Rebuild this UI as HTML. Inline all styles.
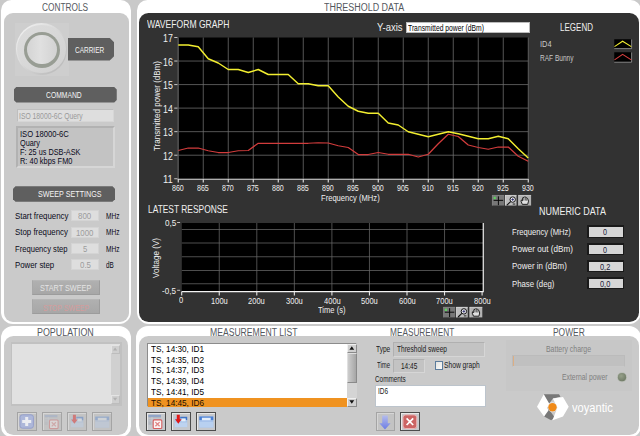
<!DOCTYPE html>
<html>
<head>
<meta charset="utf-8">
<style>
html,body{margin:0;padding:0;}
body{width:640px;height:436px;overflow:hidden;background:#c9c9c9;position:relative;font-family:"Liberation Sans",sans-serif;font-size:8px;color:#111;}
.abs{position:absolute;box-sizing:border-box;}
.wp{position:absolute;background:#fff;}
.gp{position:absolute;background:#cacaca;}
.dp{position:absolute;background:#323232;}
.t{position:absolute;white-space:nowrap;}
.bar{position:absolute;background:#5f5f5f;
 clip-path:polygon(2.5px 0,calc(100% - 2.5px) 0,100% 2.5px,100% calc(100% - 2.5px),calc(100% - 2.5px) 100%,2.5px 100%,0 calc(100% - 2.5px),0 2.5px);}
.fld{position:absolute;background:#dedede;border:1px solid #d4d4d4;box-sizing:border-box;}
.btn{position:absolute;box-sizing:border-box;background:#c4c4c4;border:1px solid #a0a0a0;border-top-color:#e0e0e0;border-left-color:#e0e0e0;}
svg{position:absolute;left:0;top:0;}
</style>
</head>
<body>
<div class="wp" style="left:1px;top:-0.2px;width:130px;height:323.9px;border-radius:10.5px 10.5px 12px 12px;"></div>
<div class="gp" style="left:3.85px;top:13px;width:125.25px;height:308.6px;border-radius:9px;"></div>
<div class="wp" style="left:1px;top:325.7px;width:129.6px;height:111.1px;border-radius:12px 12px 10.5px 10.5px;"></div>
<div class="gp" style="left:3.85px;top:336px;width:124.35px;height:98.8px;border-radius:9.5px;"></div>
<div class="wp" style="left:137px;top:-0.2px;width:504px;height:324.3px;border-radius:10.5px 10.5px 12px 12px;"></div>
<div class="dp" style="left:139px;top:13px;width:500.1px;height:309.3px;border-radius:9.5px;"></div>
<div class="wp" style="left:136.3px;top:325.9px;width:504.7px;height:110.9px;border-radius:12px 12px 10.5px 10.5px;"></div>
<div class="gp" style="left:138.6px;top:336.1px;width:500.1px;height:98.7px;border-radius:9.5px;"></div>
<div class="t" style="left:42.00px;top:2px;font-size:10px;line-height:11px;color:#54585e;transform-origin:0 50%;transform:scaleX(0.828);">CONTROLS</div>
<div class="t" style="left:323.50px;top:2px;font-size:10px;line-height:11px;color:#54585e;transform-origin:0 50%;transform:scaleX(0.894);">THRESHOLD DATA</div>
<div class="t" style="left:37.00px;top:327px;font-size:10px;line-height:11px;color:#54585e;transform-origin:0 50%;transform:scaleX(0.891);">POPULATION</div>
<div class="t" style="left:210.40px;top:327px;font-size:10px;line-height:11px;color:#54585e;transform-origin:0 50%;transform:scaleX(0.861);">MEASUREMENT LIST</div>
<div class="t" style="left:389.50px;top:327px;font-size:10px;line-height:11px;color:#54585e;transform-origin:0 50%;transform:scaleX(0.826);">MEASUREMENT</div>
<div class="t" style="left:553.25px;top:327px;font-size:10px;line-height:11px;color:#54585e;transform-origin:0 50%;transform:scaleX(0.840);">POWER</div>
<div class="abs" style="left:14.5px;top:22.5px;width:54.0px;height:53.5px;background:#cecece;"></div>
<div class="abs" style="left:15.6px;top:23.2px;width:51.8px;height:51.8px;border-radius:50%;background:linear-gradient(135deg,#f6f6f6 0%,#dcdcdc 40%,#c4c4c4 75%,#b4b4b4 100%);"></div>
<div class="abs" style="left:17.1px;top:24.7px;width:48.8px;height:48.8px;border-radius:50%;background:linear-gradient(135deg,#dcdcdc 0%,#d8d8d8 50%,#d0d0d0 100%);"></div>
<div class="abs" style="left:23.9px;top:31.5px;width:36.2px;height:36.2px;border-radius:50%;background:#989d94;"></div>
<div class="abs" style="left:27.1px;top:34.7px;width:29.8px;height:29.8px;border-radius:50%;background:linear-gradient(90deg,#d4d4d4 0%,#e0e0e0 45%,#d2d2d2 100%);"></div>
<div class="abs" style="left:67.7px;top:38px;width:46.4px;height:22.5px;background:#5f5f5f;clip-path:polygon(0 0,calc(100% - 4.3px) 0,100% 4.3px,100% calc(100% - 4.3px),calc(100% - 4.3px) 100%,0 100%);"></div>
<div class="t" style="left:74.50px;top:45px;font-size:8.9px;line-height:10px;color:#f4f4f4;transform-origin:0 50%;transform:scaleX(0.730);">CARRIER</div>
<div class="bar" style="left:13.75px;top:87px;width:103px;height:15.5px;"></div>
<div class="t" style="left:46.25px;top:90px;font-size:8.9px;line-height:10px;color:#f4f4f4;transform-origin:0 50%;transform:scaleX(0.761);">COMMAND</div>
<div class="abs" style="left:16.6px;top:108.9px;width:97.0px;height:13.199999999999989px;background:#dedede;border:1.4px solid #bebebe;border-bottom-color:#d6d6d6;border-right-color:#d6d6d6;"></div>
<div class="t" style="left:18.75px;top:111px;font-size:8.6px;line-height:10px;color:#9a9a9a;transform-origin:0 50%;transform:scaleX(0.789);">ISO 18000-6C Query</div>
<div class="abs" style="left:15.6px;top:125.7px;width:99.30000000000001px;height:42.60000000000001px;background:#c3c3c3;border:2.2px solid #b2b2b2;border-bottom-color:#d6d6d6;border-right-color:#d6d6d6;"></div>
<div class="t" style="left:20.00px;top:129px;font-size:8.6px;line-height:10px;color:#0a0a20;transform-origin:0 50%;transform:scaleX(0.887);">ISO 18000-6C</div>
<div class="t" style="left:20.00px;top:138px;font-size:8.6px;line-height:10px;color:#0a0a20;transform-origin:0 50%;transform:scaleX(0.854);">Quary</div>
<div class="t" style="left:20.00px;top:147px;font-size:8.6px;line-height:10px;color:#0a0a20;transform-origin:0 50%;transform:scaleX(0.850);">F: 25 us DSB-ASK</div>
<div class="t" style="left:20.00px;top:156px;font-size:8.6px;line-height:10px;color:#0a0a20;transform-origin:0 50%;transform:scaleX(0.865);">R: 40 kbps FM0</div>
<div class="bar" style="left:13px;top:186.25px;width:102px;height:15.5px;"></div>
<div class="t" style="left:37.50px;top:189px;font-size:8.9px;line-height:10px;color:#f4f4f4;transform-origin:0 50%;transform:scaleX(0.807);">SWEEP SETTINGS</div>
<div class="t" style="left:14.50px;top:211px;font-size:8.6px;line-height:10px;color:#0a0a20;transform-origin:0 50%;transform:scaleX(0.917);">Start frequency</div>
<div class="fld" style="left:71.25px;top:210.25px;width:27.5px;height:11.0px;"></div>
<div class="t" style="left:78.00px;top:211px;font-size:8.6px;line-height:10px;color:#9c9c9c;transform-origin:0 50%;transform:scaleX(0.923);">800</div>
<div class="t" style="left:105.50px;top:211px;font-size:8.6px;line-height:10px;color:#0a0a20;transform-origin:0 50%;transform:scaleX(0.764);">MHz</div>
<div class="t" style="left:14.50px;top:227px;font-size:8.6px;line-height:10px;color:#0a0a20;transform-origin:0 50%;transform:scaleX(0.916);">Stop frequency</div>
<div class="fld" style="left:71.25px;top:226.75px;width:27.5px;height:11.0px;"></div>
<div class="t" style="left:76.25px;top:228px;font-size:8.6px;line-height:10px;color:#9c9c9c;transform-origin:0 50%;transform:scaleX(0.915);">1000</div>
<div class="t" style="left:105.50px;top:227px;font-size:8.6px;line-height:10px;color:#0a0a20;transform-origin:0 50%;transform:scaleX(0.764);">MHz</div>
<div class="t" style="left:14.50px;top:244px;font-size:8.6px;line-height:10px;color:#0a0a20;transform-origin:0 50%;transform:scaleX(0.886);">Frequency step</div>
<div class="fld" style="left:71.25px;top:243.25px;width:27.5px;height:11.0px;"></div>
<div class="t" style="left:82.50px;top:244px;font-size:8.6px;line-height:10px;color:#9c9c9c;transform-origin:0 50%;transform:scaleX(0.889);">5</div>
<div class="t" style="left:105.50px;top:244px;font-size:8.6px;line-height:10px;color:#0a0a20;transform-origin:0 50%;transform:scaleX(0.764);">MHz</div>
<div class="t" style="left:14.50px;top:260px;font-size:8.6px;line-height:10px;color:#0a0a20;transform-origin:0 50%;transform:scaleX(0.912);">Power step</div>
<div class="fld" style="left:71.25px;top:259.25px;width:27.5px;height:11.0px;"></div>
<div class="t" style="left:79.50px;top:260px;font-size:8.6px;line-height:10px;color:#9c9c9c;transform-origin:0 50%;transform:scaleX(0.920);">0.5</div>
<div class="t" style="left:105.50px;top:260px;font-size:8.6px;line-height:10px;color:#0a0a20;transform-origin:0 50%;transform:scaleX(0.737);">dB</div>
<div class="abs" style="left:32px;top:280px;width:68px;height:14.699999999999989px;background:linear-gradient(180deg,#b0b0b0,#a7a7a7);border:1px solid #9c9c9c;border-top-color:#b6b6b6;border-left-color:#a8a8a8;"></div>
<div class="t" style="left:40.00px;top:283px;font-size:8.8px;line-height:10px;color:#e4e4e4;transform-origin:0 50%;transform:scaleX(0.825);">START SWEEP</div>
<div class="abs" style="left:32px;top:299.4px;width:68px;height:14.700000000000045px;background:linear-gradient(180deg,#b0b0b0,#a7a7a7);border:1px solid #9c9c9c;border-top-color:#b6b6b6;border-left-color:#a8a8a8;"></div>
<div class="t" style="left:42.50px;top:303px;font-size:8.8px;line-height:10px;color:#d49c9c;transform-origin:0 50%;transform:scaleX(0.799);">STOP SWEEP</div>
<div class="abs" style="left:11.3px;top:342.3px;width:111.0px;height:63.5px;background:#c1c1c1;"></div>
<div class="abs" style="left:12.4px;top:343.5px;width:107.6px;height:60.5px;background:#e1e1e1;"></div>
<div class="abs" style="left:110.75px;top:344.5px;width:8.75px;height:59.0px;background:#d0d0d0;"></div>
<div class="abs" style="left:110.75px;top:344.5px;width:8.75px;height:9.0px;background:#cfcfcf;border:1px solid #bdbdbd;border-top-color:#e4e4e4;border-left-color:#e4e4e4;"></div>
<div class="abs" style="left:110.75px;top:394.5px;width:8.75px;height:9.0px;background:#cfcfcf;border:1px solid #bdbdbd;border-top-color:#e4e4e4;border-left-color:#e4e4e4;"></div>
<svg width="640" height="436" viewBox="0 0 640 436"><path d="M113 350.5 L117.2 350.5 L115.1 347.5 Z M113 397.8 L117.2 397.8 L115.1 400.8 Z" fill="#b0b0b0"/></svg>
<svg width="640" height="436" viewBox="0 0 640 436">
<rect x="178.25" y="37.5" width="350.0" height="141.25" fill="#000"/>
<path d="M178.25 37.5 V178.75 M203.25 37.5 V178.75 M228.25 37.5 V178.75 M253.25 37.5 V178.75 M278.25 37.5 V178.75 M303.25 37.5 V178.75 M328.25 37.5 V178.75 M353.25 37.5 V178.75 M378.25 37.5 V178.75 M403.25 37.5 V178.75 M428.25 37.5 V178.75 M453.25 37.5 V178.75 M478.25 37.5 V178.75 M503.25 37.5 V178.75 M528.25 37.5 V178.75 M178.25 61.04 H528.25 M178.25 84.58 H528.25 M178.25 108.12 H528.25 M178.25 131.67 H528.25 M178.25 155.21 H528.25" stroke="#727272" stroke-width="0.75" fill="none"/>
<path d="M177.95 37.5 V179.25" stroke="#5c5c5c" stroke-width="0.6" fill="none"/>
<path d="M177.65 179.25 H528.65" stroke="#d6d6d6" stroke-width="1" fill="none"/>
<path d="M178.25 179.25 v3.3 M203.25 179.25 v3.3 M228.25 179.25 v3.3 M253.25 179.25 v3.3 M278.25 179.25 v3.3 M303.25 179.25 v3.3 M328.25 179.25 v3.3 M353.25 179.25 v3.3 M378.25 179.25 v3.3 M403.25 179.25 v3.3 M428.25 179.25 v3.3 M453.25 179.25 v3.3 M478.25 179.25 v3.3 M503.25 179.25 v3.3 M528.25 179.25 v3.3" stroke="#e4e4e4" stroke-width="1.1" fill="none"/>
<path d="M174.25 37.50 h3.2 M174.25 61.04 h3.2 M174.25 84.58 h3.2 M174.25 108.12 h3.2 M174.25 131.67 h3.2 M174.25 155.21 h3.2 M174.25 178.75 h3.2" stroke="#d8d8d8" stroke-width="0.9" fill="none"/>
<polyline points="178.25,150.5 188.25,148 198.25,148 208.25,150.75 218.25,152.5 228.25,152.5 238.25,150.75 248.25,150.5 258.25,143.25 268.25,143.25 278.25,143.25 288.25,143.25 298.25,143.25 308.25,143.25 318.25,142.75 328.25,143 338.25,145.75 348.25,147.5 358.25,154.5 368.25,154.5 378.25,152.5 388.25,154.25 398.25,154.25 408.25,154.25 418.25,157 428.25,154.25 438.25,143.75 448.25,134.25 458.25,136.5 468.25,145 478.25,147.5 488.25,149.25 498.25,147 508.25,147 518.25,156.25 528.25,161.25" fill="none" stroke="#d23c3c" stroke-width="1.25" stroke-linejoin="round"/>
<polyline points="178.25,45 188.25,45 198.25,46.75 208.25,58.75 218.25,63 228.25,69.5 238.25,69.5 248.25,72.5 258.25,69.5 268.25,74.5 278.25,74.5 288.25,74.5 298.25,83.75 308.25,83.75 318.25,85.75 328.25,85.75 338.25,97 348.25,106.25 358.25,111.25 368.25,113.25 378.25,113.25 388.25,123 398.25,125 408.25,131.75 418.25,134.25 428.25,136.75 438.25,134.25 448.25,131.75 458.25,133.75 468.25,136.25 478.25,138.75 488.25,138.75 498.25,136.25 508.25,138.75 518.25,148.75 528.25,158" fill="none" stroke="#f2ee30" stroke-width="1.45" stroke-linejoin="round"/>
<rect x="181.8" y="223" width="301.45" height="68.5" fill="#000"/>
<path d="M219.25 223 V291.5 M256.80 223 V291.5 M294.35 223 V291.5 M331.90 223 V291.5 M369.45 223 V291.5 M407.00 223 V291.5 M444.55 223 V291.5 M181.8 229.50 H483.25 M181.8 243.00 H483.25 M181.8 256.75 H483.25 M181.8 270.50 H483.25 M181.8 283.75 H483.25" stroke="#686868" stroke-width="0.75" fill="none"/>
<path d="M181.5 291.7 H483.25 V223" stroke="#f4f4f4" stroke-width="1.2" fill="none"/>
<path d="M181.70 292.0 v3.4 M219.25 292.0 v3.4 M256.80 292.0 v3.4 M294.35 292.0 v3.4 M331.90 292.0 v3.4 M369.45 292.0 v3.4 M407.00 292.0 v3.4 M444.55 292.0 v3.4 M482.10 292.0 v3.4" stroke="#e4e4e4" stroke-width="1.1" fill="none"/>
<path d="M177.1 222.5 h3 M177.1 290.3 h3" stroke="#d8d8d8" stroke-width="0.9" fill="none"/>
</svg>
<div class="t" style="left:147.00px;top:19px;font-size:10.2px;line-height:11px;color:#efefef;transform-origin:0 50%;transform:scaleX(0.842);">WAVEFORM GRAPH</div>
<div class="t" style="left:147.50px;top:204px;font-size:10.2px;line-height:11px;color:#efefef;transform-origin:0 50%;transform:scaleX(0.824);">LATEST RESPONSE</div>
<div class="t" style="left:539.00px;top:206px;font-size:10.2px;line-height:11px;color:#efefef;transform-origin:0 50%;transform:scaleX(0.880);">NUMERIC DATA</div>
<div class="t" style="left:560.00px;top:22px;font-size:10.2px;line-height:11px;color:#efefef;transform-origin:0 50%;transform:scaleX(0.787);">LEGEND</div>
<div class="t" style="left:377.00px;top:22px;font-size:10.2px;line-height:11px;color:#efefef;transform-origin:0 50%;transform:scaleX(0.934);">Y-axis</div>
<div class="abs" style="left:406px;top:21.75px;width:123.5px;height:11.25px;background:#fff;border:1px solid #bbb;"></div>
<div class="t" style="left:408.00px;top:23px;font-size:8.6px;line-height:10px;color:#000;transform-origin:0 50%;transform:scaleX(0.786);">Transmitted power (dBm)</div>
<div class="t" style="left:162.90px;top:32px;font-size:10.7px;line-height:12px;color:#efefef;transform-origin:0 50%;transform:scaleX(0.823);">17</div>
<div class="t" style="left:162.90px;top:56px;font-size:10.7px;line-height:12px;color:#efefef;transform-origin:0 50%;transform:scaleX(0.823);">16</div>
<div class="t" style="left:162.90px;top:79px;font-size:10.7px;line-height:12px;color:#efefef;transform-origin:0 50%;transform:scaleX(0.823);">15</div>
<div class="t" style="left:162.90px;top:103px;font-size:10.7px;line-height:12px;color:#efefef;transform-origin:0 50%;transform:scaleX(0.823);">14</div>
<div class="t" style="left:162.90px;top:126px;font-size:10.7px;line-height:12px;color:#efefef;transform-origin:0 50%;transform:scaleX(0.823);">13</div>
<div class="t" style="left:162.90px;top:150px;font-size:10.7px;line-height:12px;color:#efefef;transform-origin:0 50%;transform:scaleX(0.823);">12</div>
<div class="t" style="left:162.90px;top:173px;font-size:10.7px;line-height:12px;color:#efefef;transform-origin:0 50%;transform:scaleX(0.882);">11</div>
<div class="t" style="left:172.35px;top:183px;font-size:8.6px;line-height:10px;color:#efefef;transform-origin:0 50%;transform:scaleX(0.822);">860</div>
<div class="t" style="left:197.35px;top:183px;font-size:8.6px;line-height:10px;color:#efefef;transform-origin:0 50%;transform:scaleX(0.822);">865</div>
<div class="t" style="left:222.35px;top:183px;font-size:8.6px;line-height:10px;color:#efefef;transform-origin:0 50%;transform:scaleX(0.822);">870</div>
<div class="t" style="left:247.35px;top:183px;font-size:8.6px;line-height:10px;color:#efefef;transform-origin:0 50%;transform:scaleX(0.822);">875</div>
<div class="t" style="left:272.35px;top:183px;font-size:8.6px;line-height:10px;color:#efefef;transform-origin:0 50%;transform:scaleX(0.822);">880</div>
<div class="t" style="left:297.35px;top:183px;font-size:8.6px;line-height:10px;color:#efefef;transform-origin:0 50%;transform:scaleX(0.822);">885</div>
<div class="t" style="left:322.35px;top:183px;font-size:8.6px;line-height:10px;color:#efefef;transform-origin:0 50%;transform:scaleX(0.822);">890</div>
<div class="t" style="left:347.35px;top:183px;font-size:8.6px;line-height:10px;color:#efefef;transform-origin:0 50%;transform:scaleX(0.822);">895</div>
<div class="t" style="left:372.35px;top:183px;font-size:8.6px;line-height:10px;color:#efefef;transform-origin:0 50%;transform:scaleX(0.822);">900</div>
<div class="t" style="left:397.35px;top:183px;font-size:8.6px;line-height:10px;color:#efefef;transform-origin:0 50%;transform:scaleX(0.822);">905</div>
<div class="t" style="left:422.35px;top:183px;font-size:8.6px;line-height:10px;color:#efefef;transform-origin:0 50%;transform:scaleX(0.822);">910</div>
<div class="t" style="left:447.35px;top:183px;font-size:8.6px;line-height:10px;color:#efefef;transform-origin:0 50%;transform:scaleX(0.822);">915</div>
<div class="t" style="left:472.35px;top:183px;font-size:8.6px;line-height:10px;color:#efefef;transform-origin:0 50%;transform:scaleX(0.822);">920</div>
<div class="t" style="left:497.35px;top:183px;font-size:8.6px;line-height:10px;color:#efefef;transform-origin:0 50%;transform:scaleX(0.822);">925</div>
<div class="t" style="left:522.35px;top:183px;font-size:8.6px;line-height:10px;color:#efefef;transform-origin:0 50%;transform:scaleX(0.822);">930</div>
<div class="t" style="left:320.75px;top:193px;font-size:8.6px;line-height:10px;color:#efefef;transform-origin:0 50%;transform:scaleX(0.884);">Frequency (MHz)</div>
<div class="t" style="left:164.70px;top:218px;font-size:8.6px;line-height:10px;color:#efefef;transform-origin:0 50%;transform:scaleX(0.945);">0,5</div>
<div class="t" style="left:162.00px;top:286px;font-size:8.6px;line-height:10px;color:#efefef;transform-origin:0 50%;transform:scaleX(0.938);">-0,5</div>
<div class="t" style="left:179.00px;top:295px;font-size:8.6px;line-height:10px;color:#efefef;transform-origin:0 50%;transform:scaleX(0.878);">0</div>
<div class="t" style="left:210.85px;top:296px;font-size:8.6px;line-height:10px;color:#efefef;transform-origin:0 50%;transform:scaleX(0.878);">100u</div>
<div class="t" style="left:248.40px;top:296px;font-size:8.6px;line-height:10px;color:#efefef;transform-origin:0 50%;transform:scaleX(0.878);">200u</div>
<div class="t" style="left:285.95px;top:296px;font-size:8.6px;line-height:10px;color:#efefef;transform-origin:0 50%;transform:scaleX(0.878);">300u</div>
<div class="t" style="left:323.50px;top:296px;font-size:8.6px;line-height:10px;color:#efefef;transform-origin:0 50%;transform:scaleX(0.878);">400u</div>
<div class="t" style="left:361.05px;top:296px;font-size:8.6px;line-height:10px;color:#efefef;transform-origin:0 50%;transform:scaleX(0.878);">500u</div>
<div class="t" style="left:398.60px;top:296px;font-size:8.6px;line-height:10px;color:#efefef;transform-origin:0 50%;transform:scaleX(0.878);">600u</div>
<div class="t" style="left:436.15px;top:296px;font-size:8.6px;line-height:10px;color:#efefef;transform-origin:0 50%;transform:scaleX(0.878);">700u</div>
<div class="t" style="left:473.70px;top:296px;font-size:8.6px;line-height:10px;color:#efefef;transform-origin:0 50%;transform:scaleX(0.878);">800u</div>
<div class="t" style="left:318.00px;top:305px;font-size:8.6px;line-height:10px;color:#efefef;transform-origin:0 50%;transform:scaleX(0.881);">Time (s)</div>
<div class="t" style="left:157.00px;top:106.40px;font-size:8.6px;line-height:8.6px;color:#efefef;transform:translate(-50%,-50%) rotate(-90deg) scaleX(0.931);">Transmitted power (dBm)</div>
<div class="t" style="left:155.50px;top:257.50px;font-size:8.6px;line-height:8.6px;color:#efefef;transform:translate(-50%,-50%) rotate(-90deg) scaleX(0.940);">Voltage (V)</div>
<div class="t" style="left:539.50px;top:39px;font-size:8.6px;line-height:10px;color:#c8c8c8;transform-origin:0 50%;transform:scaleX(0.859);">ID4</div>
<div class="t" style="left:539.50px;top:53px;font-size:8.6px;line-height:10px;color:#c8c8c8;transform-origin:0 50%;transform:scaleX(0.762);">RAF Bunny</div>
<svg width="640" height="436" viewBox="0 0 640 436"><rect x="614.25" y="39.25" width="17.5" height="9.5" fill="#000"/><path d="M614.25 48.6 H631.6 V39.4" stroke="#ccc" stroke-width="0.6" fill="none"/><polyline points="614.5,46.6 622.6,41.2 631.3,46.6" fill="none" stroke="#f2ee30" stroke-width="1.1"/><rect x="614.25" y="52.25" width="17.5" height="10" fill="#000"/><path d="M614.25 62.2 H631.6 V52.4" stroke="#ccc" stroke-width="0.6" fill="none"/><polyline points="614.5,59.9 622.6,54.4 631.3,59.9" fill="none" stroke="#d84040" stroke-width="1.1"/></svg>
<div class="t" style="left:511.50px;top:227px;font-size:8.6px;line-height:10px;color:#efefef;transform-origin:0 50%;transform:scaleX(0.887);">Frequency (MHz)</div>
<div class="abs" style="left:586.5px;top:224.9px;width:37.200000000000045px;height:13.0px;background:#d6d6d6;border:1.5px solid #1a1a1a;border-top-width:2.4px;border-left-width:2px;"></div>
<div class="t" style="left:603.40px;top:227px;font-size:8.6px;line-height:10px;color:#1c1c38;transform-origin:0 50%;transform:scaleX(0.836);">0</div>
<div class="t" style="left:511.50px;top:244px;font-size:8.6px;line-height:10px;color:#efefef;transform-origin:0 50%;transform:scaleX(0.944);">Power out (dBm)</div>
<div class="abs" style="left:586.5px;top:242.6px;width:37.200000000000045px;height:12.300000000000011px;background:#d6d6d6;border:1.5px solid #1a1a1a;border-top-width:2.4px;border-left-width:2px;"></div>
<div class="t" style="left:603.40px;top:245px;font-size:8.6px;line-height:10px;color:#1c1c38;transform-origin:0 50%;transform:scaleX(0.836);">0</div>
<div class="t" style="left:511.50px;top:261px;font-size:8.6px;line-height:10px;color:#efefef;transform-origin:0 50%;transform:scaleX(0.925);">Power in (dBm)</div>
<div class="abs" style="left:586.5px;top:259.7px;width:37.200000000000045px;height:12.300000000000011px;background:#d6d6d6;border:1.5px solid #1a1a1a;border-top-width:2.4px;border-left-width:2px;"></div>
<div class="t" style="left:600.00px;top:262px;font-size:8.6px;line-height:10px;color:#1c1c38;transform-origin:0 50%;transform:scaleX(0.862);">0,2</div>
<div class="t" style="left:511.50px;top:279px;font-size:8.6px;line-height:10px;color:#efefef;transform-origin:0 50%;transform:scaleX(0.907);">Phase (deg)</div>
<div class="abs" style="left:586.5px;top:276.8px;width:37.200000000000045px;height:12.599999999999966px;background:#d6d6d6;border:1.5px solid #1a1a1a;border-top-width:2.4px;border-left-width:2px;"></div>
<div class="t" style="left:600.00px;top:279px;font-size:8.6px;line-height:10px;color:#1c1c38;transform-origin:0 50%;transform:scaleX(0.862);">0,0</div>
<svg width="640" height="436" viewBox="0 0 640 436"><g transform="translate(492.1,195.15)"><rect x="0" y="0" width="11.9" height="10.4" fill="#777"/><path d="M0 0.3H11.9 M0.3 0V10.4" stroke="#8d8d8d" stroke-width="0.6"/><path d="M1.5 5.2H11 M6.3 1.2V10" stroke="#0a0a0a" stroke-width="1"/><rect x="1.5" y="1.6" width="2.2" height="2.4" fill="#5fd060"/><rect x="12.9" y="0" width="11.5" height="10.4" fill="#bdbdbd"/><path d="M12.9 0.3H24.4 M13.2 0V10.4" stroke="#e4e4e4" stroke-width="0.6"/><circle cx="20.6" cy="4.4" r="2.7" fill="#f4f4f8" stroke="#111" stroke-width="1"/><path d="M19.2 4.4h2.8M20.6 3v2.8" stroke="#202060" stroke-width="0.8"/><path d="M18.6 6.4L14.8 10" stroke="#111" stroke-width="1.1"/><path d="M20.6 8.9h2.6" stroke="#111" stroke-width="0.9"/><rect x="26.3" y="0" width="12.7" height="10.4" fill="#b2b2b2"/><path d="M26.3 0.3H39 M26.6 0V10.4" stroke="#dcdcdc" stroke-width="0.6"/><path d="M30.2 9.2 L29 6.2 L29.2 4.8 L30.4 5.6 L30.6 2.6 L31.8 2.2 L32.2 1.8 L33.4 2 L34.4 2.4 L35.6 3.4 L36.4 6 L35.6 9.2 Z" fill="#e0e0e0" stroke="#111" stroke-width="0.9" stroke-linejoin="round"/><path d="M31.8 2.4V5.4 M33.3 2.2V5.4 M34.6 2.8V5.6" stroke="#111" stroke-width="0.6"/></g></svg>
<svg width="640" height="436" viewBox="0 0 640 436"><g transform="translate(443.3,307)"><rect x="0" y="0" width="11.9" height="10.4" fill="#777"/><path d="M0 0.3H11.9 M0.3 0V10.4" stroke="#8d8d8d" stroke-width="0.6"/><path d="M1.5 5.2H11 M6.3 1.2V10" stroke="#0a0a0a" stroke-width="1"/><rect x="1.5" y="1.6" width="2.2" height="2.4" fill="#5fd060"/><rect x="12.9" y="0" width="11.5" height="10.4" fill="#bdbdbd"/><path d="M12.9 0.3H24.4 M13.2 0V10.4" stroke="#e4e4e4" stroke-width="0.6"/><circle cx="20.6" cy="4.4" r="2.7" fill="#f4f4f8" stroke="#111" stroke-width="1"/><path d="M19.2 4.4h2.8M20.6 3v2.8" stroke="#202060" stroke-width="0.8"/><path d="M18.6 6.4L14.8 10" stroke="#111" stroke-width="1.1"/><path d="M20.6 8.9h2.6" stroke="#111" stroke-width="0.9"/><rect x="26.3" y="0" width="12.7" height="10.4" fill="#b2b2b2"/><path d="M26.3 0.3H39 M26.6 0V10.4" stroke="#dcdcdc" stroke-width="0.6"/><path d="M30.2 9.2 L29 6.2 L29.2 4.8 L30.4 5.6 L30.6 2.6 L31.8 2.2 L32.2 1.8 L33.4 2 L34.4 2.4 L35.6 3.4 L36.4 6 L35.6 9.2 Z" fill="#e0e0e0" stroke="#111" stroke-width="0.9" stroke-linejoin="round"/><path d="M31.8 2.4V5.4 M33.3 2.2V5.4 M34.6 2.8V5.6" stroke="#111" stroke-width="0.6"/></g></svg>
<div class="abs" style="left:147px;top:342.5px;width:210px;height:64.5px;background:#fff;border:1px solid #8c8c8c;border-right-color:#e4e4e4;border-bottom-color:#e4e4e4;"></div>
<div class="abs" style="left:148px;top:397.5px;width:199px;height:9.0px;background:#ef9220;"></div>
<div class="t" style="left:151.25px;top:344px;font-size:8.6px;line-height:10px;color:#000;transform-origin:0 50%;transform:scaleX(0.956);">TS, 14:30, ID1</div>
<div class="t" style="left:151.25px;top:355px;font-size:8.6px;line-height:10px;color:#000;transform-origin:0 50%;transform:scaleX(0.956);">TS, 14:35, ID2</div>
<div class="t" style="left:151.25px;top:365px;font-size:8.6px;line-height:10px;color:#000;transform-origin:0 50%;transform:scaleX(0.956);">TS, 14:37, ID3</div>
<div class="t" style="left:151.25px;top:376px;font-size:8.6px;line-height:10px;color:#000;transform-origin:0 50%;transform:scaleX(0.956);">TS, 14:39, ID4</div>
<div class="t" style="left:151.25px;top:387px;font-size:8.6px;line-height:10px;color:#000;transform-origin:0 50%;transform:scaleX(0.956);">TS, 14:41, ID5</div>
<div class="t" style="left:151.25px;top:398px;font-size:8.6px;line-height:10px;color:#201000;transform-origin:0 50%;transform:scaleX(0.956);">TS, 14:45, ID6</div>
<div class="abs" style="left:347px;top:343.5px;width:9.5px;height:63.0px;background:#d4d4d4;"></div>
<div class="abs" style="left:347px;top:343.5px;width:9.5px;height:9.0px;background:#d0d0d0;border:1px solid #8a8a8a;border-top-color:#f0f0f0;border-left-color:#f0f0f0;"></div>
<div class="abs" style="left:347px;top:352.5px;width:9.5px;height:30.0px;background:linear-gradient(90deg,#cdcdcd,#a6a6a6);border:1px solid #8a8a8a;border-top-color:#e0e0e0;border-left-color:#e0e0e0;"></div>
<div class="abs" style="left:347px;top:397.5px;width:9.5px;height:9.0px;background:#d0d0d0;border:1px solid #8a8a8a;border-top-color:#f0f0f0;border-left-color:#f0f0f0;"></div>
<svg width="640" height="436" viewBox="0 0 640 436"><path d="M349.4 349.8 L354.2 349.8 L351.8 346.2 Z M349.4 400.2 L354.2 400.2 L351.8 403.8 Z" fill="#111"/></svg>
<div class="abs" style="left:506px;top:340px;width:126px;height:51px;background:#c7c7c7;"></div>
<div class="abs" style="left:146px;top:412.3px;width:19.80000000000001px;height:18.599999999999966px;background:#c6c8cc;border:1px solid #4c4c4c;box-shadow:inset 1px 1px 0 #e8e8e8;"></div>
<div class="abs" style="left:171.2px;top:412.3px;width:19.80000000000001px;height:18.599999999999966px;background:#c6c8cc;border:1px solid #4c4c4c;box-shadow:inset 1px 1px 0 #e8e8e8;"></div>
<div class="abs" style="left:196.3px;top:412.3px;width:19.80000000000001px;height:18.599999999999966px;background:#c6c8cc;border:1px solid #4c4c4c;box-shadow:inset 1px 1px 0 #e8e8e8;"></div>
<div class="abs" style="left:17.2px;top:412.4px;width:19.399999999999995px;height:18.200000000000045px;background:#c3c3c3;border:1px solid #a4a4a4;box-shadow:inset 1px 1px 0 #d6d6d6;"></div>
<div class="abs" style="left:42.3px;top:412.4px;width:19.4px;height:18.200000000000045px;background:#c3c3c3;border:1px solid #a4a4a4;box-shadow:inset 1px 1px 0 #d6d6d6;"></div>
<div class="abs" style="left:67.3px;top:412.4px;width:19.39999999999999px;height:18.200000000000045px;background:#c3c3c3;border:1px solid #a4a4a4;box-shadow:inset 1px 1px 0 #d6d6d6;"></div>
<div class="abs" style="left:92.2px;top:412.4px;width:19.39999999999999px;height:18.200000000000045px;background:#c3c3c3;border:1px solid #a4a4a4;box-shadow:inset 1px 1px 0 #d6d6d6;"></div>
<div class="abs" style="left:376.1px;top:412.4px;width:18.69999999999999px;height:18.400000000000034px;background:#c3c3c3;border:1px solid #a4a4a4;box-shadow:inset 1px 1px 0 #d6d6d6;"></div>
<div class="abs" style="left:400px;top:412.4px;width:19.69999999999999px;height:18.400000000000034px;background:#c6c8cc;border:1px solid #4c4c4c;box-shadow:inset 1px 1px 0 #e8e8e8;"></div>
<svg width="640" height="436" viewBox="0 0 640 436"><g transform="translate(146,412.3)" opacity="1"><rect x="2.4" y="2.6" width="12.6" height="10" fill="#b4b8c0"/><rect x="2.4" y="2.6" width="12.6" height="2" fill="#8fa4c8"/><path d="M2.4 6.4h12.6M2.4 8.6h12.6M6 4.6v8" stroke="#d4d8de" stroke-width="0.5"/><rect x="7.2" y="7.6" width="8.6" height="8.6" rx="1" fill="#fbf4f4" stroke="#d86060" stroke-width="1.1"/><path d="M9.4 9.8l4.2 4.2M13.6 9.8l-4.2 4.2" stroke="#e08484" stroke-width="1.3"/></g><g transform="translate(171.2,412.3)" opacity="1"><rect x="3.6" y="5.2" width="12.4" height="9.6" fill="#a8c4ea"/><rect x="3.6" y="10.2" width="12.4" height="4.6" fill="#bdd3f0"/><path d="M9 4.4h7v3.4h-1.6v-1.6h-5.4z" fill="#3f74c8"/><rect x="10.2" y="6.2" width="4.2" height="2.8" fill="#e8f0fa"/><path d="M5.6 2.4h3v4.6h1.8l-3.3 4.4l-3.3-4.4h1.8z" fill="#e01818"/></g><g transform="translate(196.3,412.3)" opacity="1"><rect x="3" y="4.2" width="14" height="11" fill="#a6c2ea"/><rect x="3" y="9.6" width="14" height="5.6" fill="#b8d0f0"/><rect x="3" y="4.2" width="14" height="3.6" fill="#4a80d4"/><rect x="5.6" y="5.4" width="8.8" height="2.6" fill="#e4eefa"/></g><g transform="translate(17.4,412.4)" opacity="0.85"><rect x="2.6" y="2.4" width="13.4" height="13.4" rx="2.4" fill="#aab6de" stroke="#8d99cc" stroke-width="1"/><path d="M9.3 4.6v9M4.8 9.1h9" stroke="#f2f4fa" stroke-width="3"/></g><g transform="translate(42.3,412.4)" opacity="0.4"><rect x="2.4" y="2.6" width="12.6" height="10" fill="#b4b8c0"/><rect x="2.4" y="2.6" width="12.6" height="2" fill="#8fa4c8"/><path d="M2.4 6.4h12.6M2.4 8.6h12.6M6 4.6v8" stroke="#d4d8de" stroke-width="0.5"/><rect x="7.2" y="7.6" width="8.6" height="8.6" rx="1" fill="#fbf4f4" stroke="#d86060" stroke-width="1.1"/><path d="M9.4 9.8l4.2 4.2M13.6 9.8l-4.2 4.2" stroke="#e08484" stroke-width="1.3"/></g><g transform="translate(67.3,412.4)" opacity="0.42"><rect x="3.6" y="5.2" width="12.4" height="9.6" fill="#a8c4ea"/><rect x="3.6" y="10.2" width="12.4" height="4.6" fill="#bdd3f0"/><path d="M9 4.4h7v3.4h-1.6v-1.6h-5.4z" fill="#3f74c8"/><rect x="10.2" y="6.2" width="4.2" height="2.8" fill="#e8f0fa"/><path d="M5.6 2.4h3v4.6h1.8l-3.3 4.4l-3.3-4.4h1.8z" fill="#e01818"/></g><g transform="translate(92.2,412.4)" opacity="0.36"><rect x="3" y="4.2" width="14" height="11" fill="#a6c2ea"/><rect x="3" y="9.6" width="14" height="5.6" fill="#b8d0f0"/><rect x="3" y="4.2" width="14" height="3.6" fill="#4a80d4"/><rect x="5.6" y="5.4" width="8.8" height="2.6" fill="#e4eefa"/></g><defs><linearGradient id="ga" x1="0" y1="0" x2="0" y2="1"><stop offset="0" stop-color="#b4bcec"/><stop offset="1" stop-color="#6c7ce4"/></linearGradient></defs><path d="M382.2 415.4h5.6v7.9h2.8l-5.6 6.1l-5.6-6.1h2.8z" fill="url(#ga)"/><rect x="403" y="414.9" width="13.7" height="13.6" rx="2.6" fill="#cc6464" stroke="#eab4b4" stroke-width="1"/><path d="M406.6 418.4l6.6 6.6M413.2 418.4l-6.6 6.6" stroke="#fff" stroke-width="1.7"/><defs><radialGradient id="led" cx="0.4" cy="0.35" r="0.7"><stop offset="0" stop-color="#96a08a"/><stop offset="1" stop-color="#6f7a66"/></radialGradient></defs><circle cx="622" cy="377.2" r="5" fill="#b8bcb4"/><circle cx="622" cy="377.2" r="4.1" fill="url(#led)"/><polygon points="543.8,394.3 559,394.3 560.5,396.7 553,398.6 549.2,403.6 547.6,407.6 554.8,417.4 551.1,420.3 544.1,416.6 547,407.4" fill="#787878"/><polygon points="537,406.8 543.8,394.3 549.6,404.2 547.4,407.6 548.4,410.4 544.1,416.6" fill="#fff"/><polygon points="552.8,398.4 563,397 568.7,406.8 563,416.6 552.5,420.3 557.4,407.6" fill="#fff"/><circle cx="552.5" cy="407.2" r="4.9" fill="#fff" opacity="0.55"/><circle cx="552.5" cy="407.2" r="4.2" fill="#f08a18"/></svg>
<div class="t" style="left:375.75px;top:344px;font-size:8.6px;line-height:10px;color:#1a1a1a;transform-origin:0 50%;transform:scaleX(0.764);">Type</div>
<div class="abs" style="left:392.9px;top:342.1px;width:92.40000000000003px;height:14.699999999999989px;background:#c3c3c3;border:1.8px solid #b0b0b0;border-bottom-color:#d6d6d6;border-right-color:#d6d6d6;"></div>
<div class="t" style="left:397.00px;top:344px;font-size:8.6px;line-height:10px;color:#1a1a1a;transform-origin:0 50%;transform:scaleX(0.763);">Threshold sweep</div>
<div class="t" style="left:377.00px;top:360px;font-size:8.6px;line-height:10px;color:#1a1a1a;transform-origin:0 50%;transform:scaleX(0.692);">Time</div>
<div class="abs" style="left:392.9px;top:358.8px;width:32.5px;height:14.599999999999966px;background:#c3c3c3;border:1.8px solid #b0b0b0;border-bottom-color:#d6d6d6;border-right-color:#d6d6d6;"></div>
<div class="t" style="left:400.75px;top:361px;font-size:8.6px;line-height:10px;color:#1a1a1a;transform-origin:0 50%;transform:scaleX(0.755);">14:45</div>
<div class="abs" style="left:434.5px;top:361.25px;width:8.25px;height:8.25px;background:linear-gradient(135deg,#e4e4e0,#fafafa);border:1px solid #5c7c9c;"></div>
<div class="t" style="left:443.75px;top:360px;font-size:8.6px;line-height:10px;color:#1a1a1a;transform-origin:0 50%;transform:scaleX(0.779);">Show graph</div>
<div class="t" style="left:375.00px;top:374px;font-size:8.6px;line-height:10px;color:#1a1a1a;transform-origin:0 50%;transform:scaleX(0.740);">Comments</div>
<div class="abs" style="left:375px;top:384.5px;width:110.5px;height:22.0px;background:#fff;border:1px solid #bcc4cc;"></div>
<div class="t" style="left:378.00px;top:386px;font-size:8.6px;line-height:10px;color:#1a1a1a;transform-origin:0 50%;transform:scaleX(0.747);">ID6</div>
<div class="t" style="left:545.75px;top:344px;font-size:8.6px;line-height:10px;color:#808080;transform-origin:0 50%;transform:scaleX(0.805);">Battery charge</div>
<div class="abs" style="left:512px;top:355px;width:113px;height:12px;background:#c0c0c0;border:1px solid #bbbbbb;border-bottom-color:#c8c8c8;"></div>
<div class="abs" style="left:513px;top:356.2px;width:1.3999999999999773px;height:9.800000000000011px;background:#dcae84;"></div>
<div class="t" style="left:562.00px;top:372px;font-size:8.6px;line-height:10px;color:#808080;transform-origin:0 50%;transform:scaleX(0.793);">External power</div>
<div class="t" style="left:571.90px;top:400px;font-size:13.6px;line-height:15px;color:#fff;transform-origin:0 50%;transform:scaleX(0.818);">voyantic</div>
</body>
</html>
